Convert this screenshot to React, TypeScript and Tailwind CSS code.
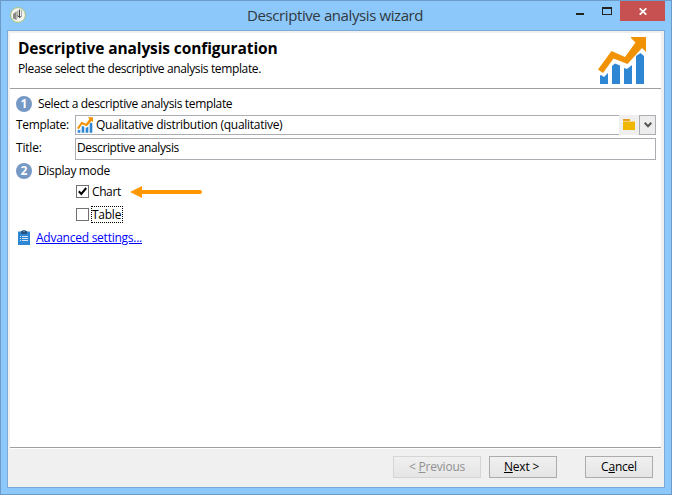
import React from 'react';

function ChartIcon({ className }: { className: string }) {
  return (
    <svg className={className} viewBox="0 0 48 47" aria-hidden="true">
      <path
        fill="#2f86d2"
        d="M2 38.5 3 38l3 2 4-4V47H2ZM14 29l3-2.500 5 2V47H14ZM26 31l3 1 5-4V47H26ZM38 19l4.500-3L46 19V47H38Z"
      />
      <path fill="#f09203" d="M48 0V15l-4-4L29.500 27 15.500 21.500 5 36 0 32.500 13.500 14 27 20 37.500 5.500 33 1V0Z" />
    </svg>
  );
}

function AppIcon() {
  return (
    <svg className="h-4 w-4" viewBox="0 0 16 16" aria-hidden="true">
      <circle cx="8" cy="8" r="7.400" fill="#f3f3f0" stroke="#a3bf66" strokeWidth="0.900" />
      <path d="M3 7 6.500 4.500V13L3 11.500Z" fill="#8a8a86" />
      <path d="M6 5 8.500 3V9L6.500 13Z" fill="#b5b5b0" />
      <path d="M9.500 2.500V10.500M7.500 8.500l2 2 1.500-1" fill="none" stroke="#4a4a4a" strokeWidth="1" />
      <path d="M11.500 3v7" stroke="#aaa" strokeWidth="1" />
    </svg>
  );
}

function Step({ n, children }: { n: string; children: React.ReactNode }) {
  return (
    <div className="flex h-4 items-center gap-[6px]">
      <span className="flex h-4 w-4 items-center justify-center rounded-full bg-[#7698c5] font-['Open_Sans',sans-serif] text-[12px] leading-none font-bold text-white">
        {n}
      </span>
      <span className="tracking-[-0.35px]">{children}</span>
    </div>
  );
}

function WizardButton({ className, children }: { className: string; children: React.ReactNode }) {
  return (
    <button className={`flex h-[22px] items-center justify-center border bg-linear-to-b from-[#f0f0f0] to-[#e5e5e5] tracking-[-0.2px] ${className}`}>
      <span className="whitespace-pre">{children}</span>
    </button>
  );
}

export default function App() {
  return (
    <div className="h-[503px] w-[689px] overflow-hidden bg-white font-['Open_Sans','Noto_Sans',sans-serif] text-[12px] leading-4 whitespace-nowrap text-black">
      <div className="flex h-[495px] w-[672px] flex-col border border-[#6c9bc9] bg-[#8dc8fa]">
        <header className="flex h-[29px] shrink-0 items-start pr-[6px] pl-[9px]">
          <div className="pt-[6px]">
            <AppIcon />
          </div>
          <h1 className="w-[320px] pt-[3px] pl-[221px] text-[15px] leading-[22px] tracking-[-0.4px] text-[#303940]">
            Descriptive analysis wizard
          </h1>
          <div className="ml-auto flex">
            <span className="mt-[12px] mr-[18px] h-[2px] w-[8px] bg-[#222]" />
            <span className="mt-[6px] mr-[8px] h-[8px] w-[10px] border border-t-2 border-[#222]" />
            <span className="flex h-[20px] w-[45px] items-center justify-center bg-[#c75050]">
              <svg className="h-[7px] w-[8px]" viewBox="0 0 8 7" aria-hidden="true">
                <path d="M.7.3 7.300 6.700M7.300.3.7 6.700" stroke="white" strokeWidth="1.700" />
              </svg>
            </span>
          </div>
        </header>

        <div className="mx-[6px] flex h-[458px] flex-col border border-[#78a9d8] bg-[#f0f0f0] pt-[2px]">
          <div className="mr-[3px] ml-[2px] flex h-[56px] shrink-0 justify-between border-b border-[#a0a0a0] bg-white pl-[8px] pr-[15px]">
            <div>
              <h2 className="pt-[5px] text-[15.500px] leading-[20px] font-bold tracking-[-0.1px]">
                Descriptive analysis configuration
              </h2>
              <p className="mt-[3px] tracking-[-0.370px]">Please select the descriptive analysis template.</p>
            </div>
            <ChartIcon className="mt-[4px] h-[47px] w-[48px]" />
          </div>

          <main className="mr-[3px] ml-[2px] flex h-[359px] shrink-0 flex-col border-b border-[#a0a0a0] bg-white pt-[7px] pl-[6px]">
            <Step n="1">Select a descriptive analysis template</Step>
            <div className="mt-[3px] flex h-[20px] items-center">
              <label className="w-[59px] tracking-[-0.320px]">Template:</label>
              <div className="flex h-[20px] w-[544px] items-center border border-r-0 border-[#abadb3] pl-[1px]">
                <ChartIcon className="h-[16px] w-[16px]" />
                <span className="ml-[3px] tracking-[-0.280px]">Qualitative distribution (qualitative)</span>
              </div>
              <button className="flex h-[20px] w-[20px] items-start justify-center bg-[#efefef] pt-[4px]">
                <svg className="h-[11px] w-[12px]" viewBox="0 0 12 11" aria-hidden="true">
                  <path d="M0 0h7v2h5v9H0Z" fill="#efb700" />
                  <path d="M0 0h6v1.500H0Z" fill="#e59624" />
                  <path d="M0 2h12v1H0Z" fill="#f5d27c" />
                </svg>
              </button>
              <button className="flex h-[20px] w-[17px] items-center justify-center border border-[#abadb3] bg-[#ededed]">
                <svg className="h-[6px] w-[8px]" viewBox="0 0 8 6" aria-hidden="true">
                  <path d="m.7.8 3.300 3.400L7.300.8" fill="none" stroke="#555" strokeWidth="2" />
                </svg>
              </button>
            </div>
            <div className="mt-[3px] flex h-[22px]">
              <label className="w-[59px] pt-[2px] tracking-[-0.2px]">Title:</label>
              <div className="h-[22px] w-[581px] border border-[#abadb3] pt-px pl-[1px] tracking-[-0.380px]">Descriptive analysis</div>
            </div>
            <div className="mt-[3px]">
              <Step n="2">Display mode</Step>
            </div>
            <div className="mt-[5px] ml-[60px] flex h-[16px] items-start">
              <span className="mt-px flex h-[13px] w-[13px] items-center justify-center border border-[#707070]">
                <svg className="h-[9px] w-[9px]" viewBox="0 0 9 9" aria-hidden="true">
                  <path d="M.8 4.300 3.300 7 8.200 1" fill="none" stroke="black" strokeWidth="2" />
                </svg>
              </span>
              <span className="ml-[3px] w-[38px] tracking-[-0.4px]">Chart</span>
              <svg className="mt-[2px] h-[12px] w-[72px]" viewBox="0 0 72 12" aria-hidden="true">
                <path d="M0 6 12 0V12Z" fill="#ff9800" />
                <path d="M10 6H70" stroke="#ff9800" strokeWidth="4" strokeLinecap="round" />
              </svg>
            </div>
            <div className="mt-[7px] ml-[60px] flex h-[16px] items-start">
              <span className="mt-px h-[13px] w-[13px] border border-[#707070]" />
              <span className="-mt-px ml-[2px] flex h-[17px] w-[32px] items-center border border-dotted border-black tracking-[-0.25px]">Table</span>
            </div>
            <div className="mt-[7px] ml-[2px] flex h-[16px] items-start">
              <svg className="-mt-px h-[16px] w-[12px]" viewBox="0 0 12 16" aria-hidden="true">
                <path d="M0 2.500h12V16H0Z" fill="#2f86d2" />
                <path d="M3 2h1.500V1h3v1H9v3H3Z" fill="#28557f" />
                <path d="M5.500 1.500h1v1h-1Z" fill="white" />
                <path d="M2 7.500h1m1 0h6M2 9.500h1m1 0h6M2 11.500h1m1 0h6" stroke="#d5e7f7" />
              </svg>
              <a className="ml-[6px] tracking-[-0.250px] text-[#0000ff] underline underline-offset-1">Advanced settings...</a>
            </div>
          </main>

          <footer className="mr-[3px] ml-[2px] flex flex-1 items-start border-t border-white pt-[7px] pl-[383px]">
            <WizardButton className="w-[88px] border-[#d5d5d5] text-[#909090]">
              {'< '}<u>P</u>revious
            </WizardButton>
            <WizardButton className="ml-[8px] w-[68px] border-[#acacac] pr-[3px]">
              <u>N</u>{'ext >'}
            </WizardButton>
            <WizardButton className="ml-[28px] w-[68px] border-[#acacac]">
              C<u>a</u>ncel
            </WizardButton>
          </footer>
        </div>
      </div>
    </div>
  );
}
